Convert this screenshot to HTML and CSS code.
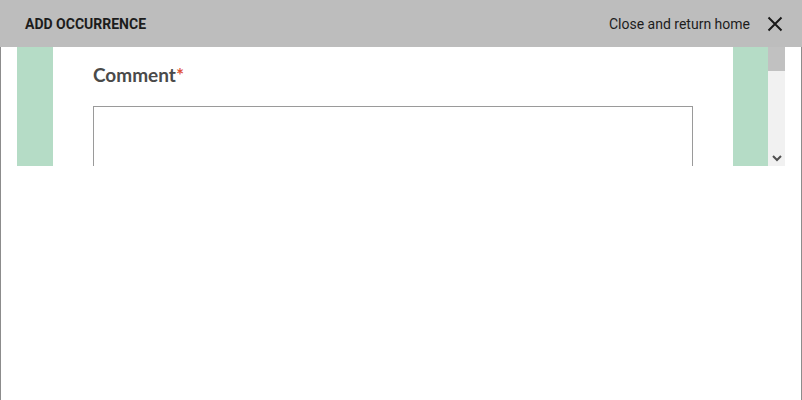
FILE: index.html
```html
<!DOCTYPE html>
<html>
<head>
<meta charset="utf-8">
<link rel="stylesheet" href="styles.css">
</head>
<body>
<header class="topbar">
  <div class="title">ADD OCCURRENCE</div>
  <div class="close">
    <span class="close-text">Close and return home</span>
    <svg class="close-icon" width="16" height="16" viewBox="0 0 16 16"><path d="M1.5 1.5 L14.5 14.5 M14.5 1.5 L1.5 14.5" stroke="#1a1a1a" stroke-width="2" fill="none"/></svg>
  </div>
</header>
<main class="page">
  <section class="panel">
    <div class="rail rail-left"></div>
    <div class="content">
      <label class="label">Comment<span class="req">*</span></label>
      <div class="textarea"></div>
    </div>
    <div class="rail rail-right"></div>
    <div class="scrollbar">
      <div class="thumb"></div>
      <div class="track"></div>
      <svg class="arrow" width="10" height="8" viewBox="0 0 10 8"><path d="M1 2 L5 6 L9 2" stroke="#505050" stroke-width="2" fill="none"/></svg>
    </div>
  </section>
</main>
</body>
</html>
```
FILE: styles.css
```css
html, body {
  margin: 0;
  padding: 0;
  background: #ffffff;
  height: 100%;
  overflow: hidden;
}
body {
  font-family: Roboto, "Liberation Sans", sans-serif;
  width: 802px;
  height: 400px;
}
.topbar {
  height: 47px;
  background: #bdbdbd;
  display: flex;
  align-items: center;
  justify-content: space-between;
  padding: 0 19px 0 25px;
  box-sizing: border-box;
}
.title {
  font-weight: 700;
  font-size: 14px;
  color: #1c1c1c;
  letter-spacing: 0;
  padding-top: 1px;
}
.close {
  display: flex;
  align-items: center;
  gap: 17px;
}
.close-text {
  font-size: 14px;
  color: #1c1c1c;
  padding-top: 1px;
}
.close-icon {
  display: block;
}
.page {
  height: 353px;
  border-left: 1px solid #8c8c8c;
  border-right: 1px solid #8c8c8c;
  box-sizing: border-box;
}
.panel {
  height: 119px;
  display: flex;
  padding-left: 16px;
  overflow: hidden;
}
.rail {
  background: #b5dcc6;
  flex: none;
}
.rail-left {
  width: 36px;
}
.content {
  width: 680px;
  flex: none;
  padding-left: 40px;
  box-sizing: border-box;
}
.label {
  display: block;
  font-family: Lato, "Open Sans", sans-serif;
  font-weight: 700;
  font-size: 19px;
  color: #4a4a4a;
  margin-top: 16px;
  line-height: 23px;
}
.req {
  color: #e0553a;
}
.textarea {
  margin-top: 20px;
  width: 600px;
  height: 80px;
  border: 1px solid #9a9a9a;
  box-sizing: border-box;
}
.rail-right {
  width: 35px;
}
.scrollbar {
  width: 17px;
  flex: none;
  background: #f1f1f1;
  position: relative;
}
.thumb {
  height: 24px;
  background: #c1c1c1;
}
.arrow {
  position: absolute;
  left: 4px;
  bottom: 4px;
}
```
